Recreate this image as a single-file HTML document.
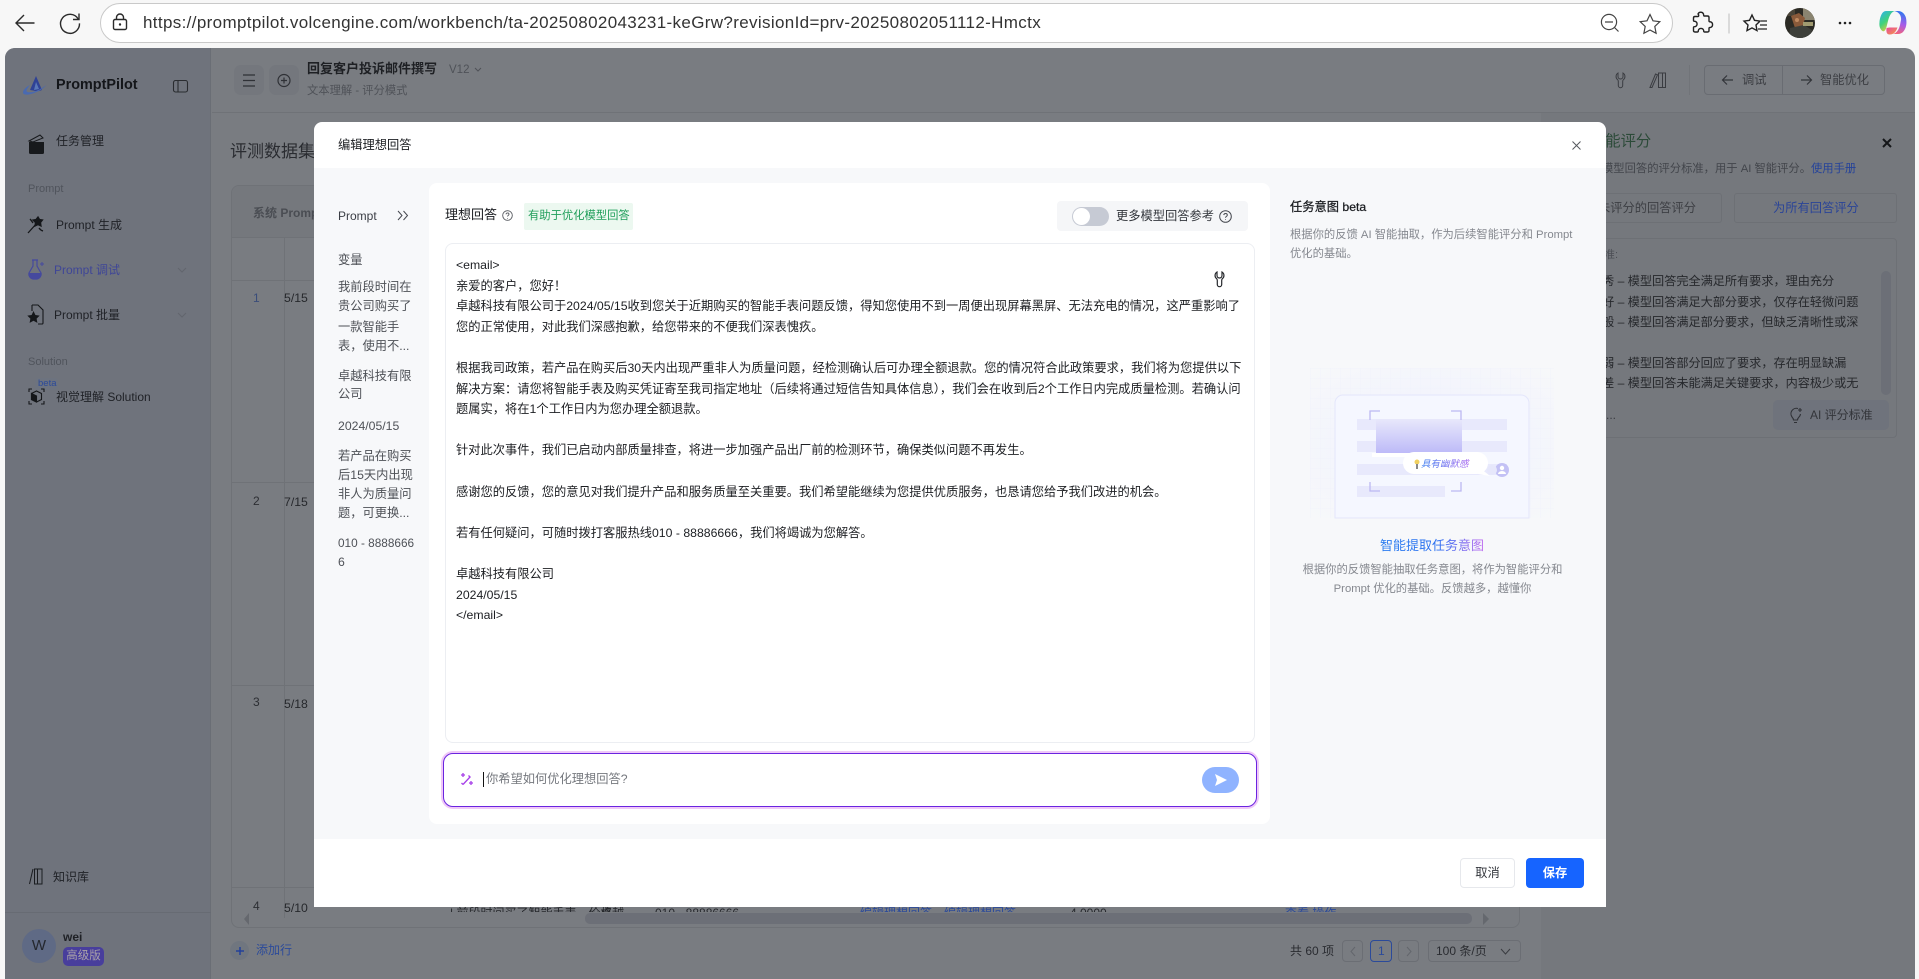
<!DOCTYPE html>
<html lang="zh"><head><meta charset="utf-8"><title>PromptPilot</title>
<style>
html,body{margin:0;padding:0;width:1919px;height:979px;overflow:hidden;background:#f7f7f7}
body{position:relative;font-family:"Liberation Sans","Noto Sans CJK SC",sans-serif;font-size:12.25px;color:#1c1e22}
.a{position:absolute;box-sizing:border-box}
.t{position:absolute;white-space:nowrap;line-height:20px}
svg{position:absolute;overflow:visible}
</style></head><body>

<!-- browser chrome -->
<svg style="left:0;top:0" width="90" height="48" fill="none" stroke="#2a2a2a" stroke-width="1.4">
<path d="M34.500 23H16.500M24 15l-8 8 8 8"/>
<path d="M78.200 19a9.500 9.500 0 1 0 1.300 4.400"/><path d="M79 13.500V19.500H73"/>
</svg>
<div class="a" style="left:100px;top:3px;width:1573px;height:40px;background:#fff;border:1px solid #c9c9c9;border-radius:20px"></div>
<svg style="left:0;top:0" width="140" height="48" fill="none" stroke="#2a2a2a" stroke-width="1.400">
<path d="M115 19.500h10a1.500 1.500 0 0 1 1.500 1.500v7a1.500 1.500 0 0 1-1.500 1.500h-10a1.500 1.500 0 0 1-1.500-1.500v-7a1.500 1.500 0 0 1 1.500-1.500zM116.500 19.500v-2a3.500 3.500 0 0 1 7 0v2"/><circle cx="120" cy="24.500" r="1.200" fill="#2a2a2a" stroke="none"/>
</svg>
<div class="t" style="left:143px;top:13px;font-size:17px;color:#333;letter-spacing:.35px">https://promptpilot.volcengine.com/workbench/ta-20250802043231-keGrw?revisionId=prv-20250802051112-Hmctx</div>
<svg style="left:1595px;top:5px" width="320" height="40" fill="none" stroke="#444" stroke-width="1.200">
<circle cx="14" cy="17" r="7.600"/><path d="M10 17h8M19.500 22.500L23.500 26.500"/>
<path d="M55 9.500l3 6.300 6.800.9-5 4.800 1.300 6.800-6.100-3.300-6.100 3.300 1.300-6.800-5-4.800 6.800-.9z"/>
<path d="M104 10a3 3 0 0 1 5.500 0c0 1 0 1.500.5 2h3.500c1 0 1.500.5 1.500 1.500V17c0 .5.500 1 1.500.8a3 3 0 0 1 0 5.700c-1-.2-1.500.300-1.500.8v2.200c0 1-.5 1.500-1.500 1.500h-3c-.5 0-1-.5-.8-1.500a2.800 2.800 0 0 0-5.400 0c.2 1-.3 1.500-.8 1.500h-2.500c-1 0-1.500-.5-1.500-1.500v-3c0-.5.500-1 1.500-.8a2.800 2.800 0 0 0 0-5.400c-1 .2-1.500-.3-1.500-.8v-2.500c0-1 .5-1.500 1.500-1.500h3c.5 0 1-.5.500-2z" stroke="#222" stroke-width="1.400" transform="translate(-1 -1)"/>
<path d="M134 8.500v20" stroke="#c8c8c8"/>
<path d="M157 10l2.500 5.300 5.500.8-4 3.900 1 5.600-5-2.700-5 2.700 1-5.600-4-3.900 5.500-.8z" stroke="#222" stroke-width="1.400"/>
<path d="M166 16h6M165 20h7M163 24h9" stroke="#222"/>
<circle cx="245" cy="18" r="1.300" fill="#222" stroke="none"/><circle cx="250" cy="18" r="1.300" fill="#222" stroke="none"/><circle cx="255" cy="18" r="1.300" fill="#222" stroke="none"/>
</svg>
<svg style="left:1785px;top:8px" width="30" height="30"><defs><clipPath id="av"><circle cx="15" cy="15" r="15"/></clipPath></defs>
<g clip-path="url(#av)"><rect width="30" height="30" fill="#2b2a24"/><rect x="18" y="0" width="12" height="12" fill="#8a8470"/><rect x="0" y="0" width="10" height="8" fill="#4a4438"/><path d="M6 8l8-3 6 5-2 8-8 2z" fill="#8a5a3a"/><path d="M5 20l14-3 8 5-2 8H4z" fill="#3d3f3a"/><rect x="18" y="14" width="10" height="4" fill="#a09a70"/><circle cx="12" cy="12" r="2" fill="#c08a60"/></g></svg>
<svg style="left:1879px;top:10px" width="28" height="26" viewBox="0 0 28 26"><defs>
<linearGradient id="c1" x1="0" y1="0" x2=".6" y2="1"><stop offset="0" stop-color="#2fb0f2"/><stop offset=".55" stop-color="#3fd27a"/><stop offset="1" stop-color="#f6c93a"/></linearGradient>
<linearGradient id="c2" x1=".6" y1="0" x2=".4" y2="1"><stop offset="0" stop-color="#2a78f0"/><stop offset=".55" stop-color="#a85ce8"/><stop offset="1" stop-color="#f2627a"/></linearGradient>
<linearGradient id="c3" x1="0" y1="0" x2="1" y2="1"><stop offset="0" stop-color="#e84aa0"/><stop offset="1" stop-color="#f59a40"/></linearGradient></defs>
<path d="M7 1h8.500C11.500 2.500 10 7 9 11l-1.500 6C6.500 20.500 5 22 3.500 21 1 19.500 0 16 .5 12 1 7 3 1 7 1z" fill="url(#c1)"/>
<path d="M15 1h4c4 0 7 3 8 7 1 5 .5 10-3 14-1 1-3 2-5 2H14c4-1 6-5 7-9l1-5c.5-3-1-8-7-9z" fill="url(#c2)"/>
<path d="M7.500 18l3-.5h8c-1 3-3 7-8 7-2.500 0-3.500-2-3-6.500z" fill="url(#c3)"/></svg>

<!-- app background -->
<div class="a" style="left:5px;top:48px;width:1910px;height:935px;background:#797c81;border-radius:10px 10px 0 0;overflow:hidden">
  <div class="a" style="left:0;top:0;width:206px;height:935px;background:#6f737c;border-right:1px solid #6a6e75"></div>
  <div class="a" style="left:207px;top:64px;width:1703px;height:1px;background:#6f7277"></div>
  <div class="a" style="left:1536px;top:65px;width:374px;height:870px;background:#75787d"></div>
  <div class="a" style="left:0;top:864px;width:206px;height:1px;background:#676b73"></div>
</div>

<!-- sidebar -->
<svg style="left:23px;top:76px" width="24" height="19" viewBox="0 0 24 19">
<path d="M13 0l6 14c-3 1.500-6 1.500-9 .5L7 14z" fill="#2f4296"/><path d="M13 6l3 7-5 1z" fill="#5a78b8"/>
<path d="M7 9C3 11 0 14 0 16.500 0 19 4 19 8 18c6-1.500 12-5 15.500-9-3.500 2.500-9 6-14 7-3 .5-5.500.5-6-1 0-1.500 1.500-3.500 3.500-6z" fill="#4a6ab0"/></svg>
<div class="t" style="left:56px;top:75px;font-size:14.400px;font-weight:700;color:#14161a">PromptPilot</div>
<svg style="left:173px;top:80px" width="16" height="13" fill="none" stroke="#2a2c30" stroke-width="1.100"><rect x=".5" y=".5" width="14" height="11.500" rx="2"/><path d="M5 .5v11.500"/></svg>

<svg style="left:28px;top:134px" width="17" height="21" viewBox="0 0 17 21"><path d="M1 7L12 1l3 3-10 4z" fill="none" stroke="#17191c" stroke-width="1"/><path d="M1 8h15v10.500a1.500 1.500 0 0 1-1.500 1.500h-12A1.500 1.500 0 0 1 1 18.500z" fill="#17191c"/></svg>
<div class="t" style="left:56px;top:131px;font-size:12px;color:#1f2126">任务管理</div>
<div class="t" style="left:28px;top:179px;font-size:11px;color:#50545c">Prompt</div>

<svg style="left:27px;top:216px" width="18" height="18" viewBox="0 0 18 18" fill="none" stroke="#15171a" stroke-width="1.300"><path d="M1 17L10 7"/><path d="M11 1l1.500 2.500L15.500 4 13.500 6.500 14 10l-3-1.500L8 10l.5-3.500L6 4l3-.5z" fill="#15171a"/><path d="M3 3c1 1 2 2.500 3 4M12 12c1 1.500 2.500 2.500 4 3"/></svg>
<div class="t" style="left:56px;top:215px;font-size:12px;color:#1f2126">Prompt 生成</div>

<svg style="left:27px;top:259px" width="18" height="22" viewBox="0 0 18 22"><path d="M5 1h6M6 1v6L2 14a5 5 0 0 0 4 6h4a5 5 0 0 0 4-6l-4-7V1" fill="none" stroke="#45499e" stroke-width="1.200"/><path d="M1.800 14h12.400a5 5 0 0 1-4.200 6H6a5 5 0 0 1-4.200-6z" fill="#45499e"/><path d="M15 3v4M13 5h4" stroke="#45499e"/></svg>
<div class="t" style="left:54px;top:260px;font-size:12px;color:#3f4697">Prompt 调试</div>
<svg style="left:177px;top:266px" width="10" height="8" fill="none" stroke="#62656d"><path d="M1 2l4 4 4-4"/></svg>

<svg style="left:27px;top:304px" width="17" height="21" viewBox="0 0 17 21"><path d="M5 1h6l5 5v13a1 1 0 0 1-1 1h-4M5 1v6" fill="none" stroke="#15171a" stroke-width="1.100"/><path d="M6.500 7l1.900 4 4.300.6-3.100 3 .8 4.300-3.900-2.100-3.900 2.100.8-4.300-3.100-3 4.300-.6z" fill="#15171a"/></svg>
<div class="t" style="left:54px;top:305px;font-size:12px;color:#1f2126">Prompt 批量</div>
<svg style="left:177px;top:311px" width="10" height="8" fill="none" stroke="#62656d"><path d="M1 2l4 4 4-4"/></svg>

<div class="t" style="left:28px;top:352px;font-size:11px;color:#50545c">Solution</div>
<div class="a" style="left:35px;top:378px;width:23px;height:12px;background:#6d737f;border-radius:3px"></div>
<div class="t" style="left:38px;top:374px;font-size:9.500px;color:#2b4a9a">beta</div>
<svg style="left:28px;top:388px" width="17" height="17" viewBox="0 0 17 17" fill="none" stroke="#15171a" stroke-width="1.100"><path d="M1 4V1h3M13 1h3v3M16 13v3h-3M4 16H1v-3"/><path d="M8.500 3l5 2.500v6l-5 2.500-5-2.500v-6z"/><path d="M3.500 5.500l5 2.500v6l-5-2.500z" fill="#15171a"/></svg>
<div class="t" style="left:56px;top:387px;font-size:12px;color:#1f2126">视觉理解 Solution</div>

<svg style="left:29px;top:868px" width="14" height="17" viewBox="0 0 14 17" fill="none" stroke="#1a1c20" stroke-width="1"><path d="M.5 16L4 1M5.500 1h3v15h-3zM8.500 1H13v15H8.500z"/></svg>
<div class="t" style="left:53px;top:867px;font-size:12px;color:#1f2126">知识库</div>
<div class="a" style="left:22px;top:929px;width:34px;height:34px;border-radius:50%;background:#5f6a85"></div>
<div class="t" style="left:22px;top:936px;width:34px;text-align:center;font-size:15px;color:#24272e">W</div>
<div class="t" style="left:63px;top:927px;font-size:12px;font-weight:700;color:#1f2126">wei</div>
<div class="a" style="left:63px;top:947px;width:41px;height:19px;background:#483e9c;border-radius:5px"></div>
<div class="t" style="left:63px;top:946px;width:41px;text-align:center;font-size:11.500px;color:#a9a2a8">高级版</div>

<!-- top header -->
<div class="a" style="left:234px;top:65px;width:30px;height:30px;background:#74777d;border-radius:7px"></div>
<div class="a" style="left:269px;top:65px;width:30px;height:30px;background:#74777d;border-radius:7px"></div>
<svg style="left:242px;top:73px" width="50" height="15" fill="none" stroke="#2f3136" stroke-width="1.200"><path d="M1 2h12M1 7.500h12M1 13h12"/><circle cx="42" cy="7.500" r="6"/><path d="M39 7.500h6M42 4.500v6"/></svg>
<div class="t" style="left:307px;top:59px;font-size:13px;font-weight:700;color:#1e2024">回复客户投诉邮件撰写</div>
<div class="t" style="left:449px;top:60px;font-size:11.500px;color:#4f5258">V12</div>
<svg style="left:474px;top:67px" width="8" height="6" fill="none" stroke="#4f5258"><path d="M1 1l3 3 3-3"/></svg>
<div class="t" style="left:307px;top:81px;font-size:11.300px;color:#4f5258">文本理解 - 评分模式</div>

<svg style="left:1615px;top:72px" width="52" height="16" viewBox="0 0 52 16" fill="none" stroke="#3a3c41" stroke-width="1"><path d="M3 1C.5 2.500.5 6 2.500 7.500c.8.600.8 1.200.8 2v4a2.200 2.200 0 0 0 4.400 0v-4c0-.8 0-1.400.8-2C10.500 6 10.500 2.500 8 1v3.500a2.500 2.500 0 0 1-5 0z"/><path d="M35 15.500L40.500 2l2 .8L37 15.500zM43.500 1h4v14.500h-4zM47.500 1h3v14.500h-3z"/></svg>
<div class="a" style="left:1689px;top:65px;width:1px;height:30px;background:#717479"></div>
<div class="a" style="left:1704px;top:65px;width:181px;height:30px;border:1px solid #696c72;border-radius:4px;background:#797c81"></div>
<div class="a" style="left:1782px;top:65px;width:1px;height:30px;background:#696c72"></div>
<svg style="left:1721px;top:72px" width="100" height="16" fill="none" stroke="#33353a" stroke-width="1.200"><path d="M12 8H1.500M6 3.500L1.500 8 6 12.500"/><path d="M80 8h10.500M86 3.500L90.500 8 86 12.500"/></svg>
<div class="t" style="left:1742px;top:70px;font-size:12.250px;color:#3d3f44">调试</div>
<div class="t" style="left:1820px;top:70px;font-size:12.250px;color:#3d3f44">智能优化</div>

<!-- background table -->
<div class="t" style="left:230px;top:142px;font-size:17px;color:#2a2c31">评测数据集</div>
<div class="a" style="left:231px;top:185px;width:1289px;height:743px;border:1px solid #6f7277;border-radius:8px;overflow:hidden">
  <div class="a" style="left:0;top:0;width:1289px;height:52px;background:#75787d;border-bottom:1px solid #6f7277"></div>
  <div class="a" style="left:0;top:94px;width:1289px;height:1px;background:#6f7277"></div>
  <div class="a" style="left:0;top:296px;width:1289px;height:1px;background:#6f7277"></div>
  <div class="a" style="left:0;top:499px;width:1289px;height:1px;background:#6f7277"></div>
  <div class="a" style="left:0;top:701px;width:1289px;height:1px;background:#6f7277"></div>
  <div class="a" style="left:52px;top:52px;width:1px;height:680px;background:#6f7277"></div>
  <div class="t" style="left:21px;top:17px;font-size:12px;font-weight:700;color:#4a4d53">系统 Prompt</div>
</div>
<div class="t" style="left:253px;top:288px;font-size:12px;color:#3a4d7a">1</div>
<div class="t" style="left:284px;top:288px;font-size:12.250px;color:#26282c">5/15</div>
<div class="t" style="left:253px;top:491px;font-size:12px;color:#2c2e33">2</div>
<div class="t" style="left:284px;top:492px;font-size:12.250px;color:#26282c">7/15</div>
<div class="t" style="left:253px;top:692px;font-size:12px;color:#2c2e33">3</div>
<div class="t" style="left:284px;top:694px;font-size:12.250px;color:#26282c">5/18</div>
<div class="a" style="left:240px;top:893px;width:1260px;height:19px;overflow:hidden">
  <div class="t" style="left:13px;top:3px;font-size:12px;color:#2c2e33">4</div>
  <div class="t" style="left:44px;top:5px;font-size:12.250px;color:#26282c">5/10</div>
  <div class="t" style="left:210px;top:10px;font-size:12px;color:#26282c">| 前段时间买了智能手表，价格</div>
  <div class="t" style="left:360px;top:10px;font-size:12px;color:#26282c">卓越</div>
  <div class="t" style="left:415px;top:10px;font-size:12px;color:#26282c">010 - 88886666</div>
  <div class="t" style="left:620px;top:10px;font-size:12px;color:#2b4a9a">编辑理想回答，编辑理想回答</div>
  <div class="t" style="left:830px;top:10px;font-size:12px;color:#26282c">4.0000</div>
  <div class="t" style="left:1045px;top:10px;font-size:12px;color:#2b4a9a">查看 操作</div>
  <div class="t" style="left:1190px;top:10px;font-size:12px;color:#26282c">. . . .</div>
</div>
<div class="a" style="left:585px;top:913px;width:887px;height:11px;background:#6c6f77;border-radius:5px"></div>
<svg style="left:243px;top:912px" width="1250" height="14"><path d="M6 1L1 7l5 6z" fill="#65686e"/><path d="M1240 1l6 6-6 6z" fill="#65686e"/></svg>
<div class="a" style="left:230px;top:941px;width:19px;height:19px;border-radius:50%;background:#70767f"></div>
<svg style="left:235px;top:946px" width="10" height="10" stroke="#22409a" stroke-width="1.500"><path d="M5 1v8M1 5h8"/></svg>
<div class="t" style="left:256px;top:940px;font-size:12px;color:#2b4a9a">添加行</div>
<div class="t" style="left:1290px;top:941px;font-size:12px;color:#2a2c31">共 60 项</div>
<div class="a" style="left:1342px;top:940px;width:21px;height:22px;border:1px solid #6b6e74;border-radius:4px"></div>
<div class="a" style="left:1370px;top:940px;width:22px;height:22px;border:1px solid #2b4a9a;border-radius:4px"></div>
<div class="a" style="left:1398px;top:940px;width:21px;height:22px;border:1px solid #6b6e74;border-radius:4px"></div>
<div class="a" style="left:1428px;top:940px;width:93px;height:22px;border:1px solid #6b6e74;border-radius:4px"></div>
<svg style="left:1349px;top:946px" width="80" height="11" fill="none" stroke="#63666c"><path d="M6 1L2 5.500 6 10"/><path d="M58 1l4 4.500L58 10"/></svg>
<div class="t" style="left:1378px;top:941px;font-size:12px;color:#2b4a9a">1</div>
<div class="t" style="left:1436px;top:941px;font-size:12px;color:#2a2c31">100 条/页</div>
<svg style="left:1500px;top:948px" width="11" height="8" fill="none" stroke="#3a3c41"><path d="M1 1l4.500 5L10 1"/></svg>

<!-- right panel background -->
<div class="t" style="left:1590px;top:132px;font-size:15.300px;color:#2b4a38">智能评分</div>
<svg style="left:1882px;top:138px" width="10" height="10" stroke="#15171a" stroke-width="2"><path d="M1 1l8 8M9 1l-8 8"/></svg>
<div class="t" style="left:1500px;top:159px;font-size:11.300px;color:#42454b;width:311px;text-align:right">定义模型回答的评分标准，用于 AI 智能评分。</div>
<div class="t" style="left:1811px;top:159px;font-size:11.300px;color:#24429a">使用手册</div>
<div class="a" style="left:1590px;top:193px;width:132px;height:30px;border:1px solid #6d7075;border-radius:3px"></div>
<div class="t" style="left:1598px;top:198px;font-size:12.250px;color:#3d3f44">未评分的回答评分</div>
<div class="a" style="left:1734px;top:193px;width:163px;height:30px;border:1px solid #6d7075;border-radius:3px"></div>
<div class="t" style="left:1773px;top:198px;font-size:12.250px;color:#2a4498">为所有回答评分</div>
<div class="a" style="left:1560px;top:238px;width:337px;height:200px;border:1px solid #6d7075;border-radius:4px"></div>
<div class="t" style="left:1571px;top:245px;font-size:11px;color:#4c4f55">评分标准:</div>
<div class="t" style="left:1590px;top:271px;font-size:12.150px;color:#26282c">优秀 – 模型回答完全满足所有要求，理由充分</div>
<div class="t" style="left:1590px;top:292px;font-size:12.150px;color:#26282c">良好 – 模型回答满足大部分要求，仅存在轻微问题</div>
<div class="t" style="left:1590px;top:312px;font-size:12.150px;color:#26282c">一般 – 模型回答满足部分要求，但缺乏清晰性或深</div>
<div class="t" style="left:1590px;top:353px;font-size:12.150px;color:#26282c">较弱 – 模型回答部分回应了要求，存在明显缺漏</div>
<div class="t" style="left:1590px;top:373px;font-size:12.150px;color:#26282c">很差 – 模型回答未能满足关键要求，内容极少或无</div>
<div class="t" style="left:1606px;top:405px;font-size:12px;color:#3a3c41">...</div>
<div class="a" style="left:1881px;top:271px;width:10px;height:124px;background:#6c6f77;border-radius:5px"></div>
<div class="a" style="left:1773px;top:400px;width:116px;height:30px;background:#6f737c;border-radius:5px"></div>
<svg style="left:1789px;top:407px" width="14" height="17" fill="none" stroke="#2f3136" stroke-width="1.100"><path d="M9 1.500A5.500 5.500 0 0 0 3 10c1 1 1.500 2 1.500 3h4c0-1 .5-2 1.500-3a5 5 0 0 0 1.500-3M5 15.500h3"/><path d="M11 1v4M9 3h4"/></svg>
<div class="t" style="left:1810px;top:405px;font-size:12px;color:#33353a">AI 评分标准</div>

<!-- MODAL -->
<div class="a" style="left:314px;top:122px;width:1292px;height:785px;background:#fff;border-radius:8px 8px 0 0">
  <div class="a" style="left:0;top:46px;width:1292px;height:671px;background:#f7f8fa"></div>
</div>
<div class="t" style="left:338px;top:135px;font-size:12.250px;color:#1a1c20">编辑理想回答</div>
<svg style="left:1572px;top:141px" width="9" height="9" stroke="#55585e" stroke-width="1"><path d="M.5.5l8 8M8.500.5l-8 8"/></svg>

<!-- left column -->
<div class="t" style="left:338px;top:206px;font-size:12px;color:#3a3d44">Prompt</div>
<svg style="left:397px;top:210px" width="12" height="11" fill="none" stroke="#45484f" stroke-width="1"><path d="M1 1l4 4.500L1 10M6.500 1l4 4.500-4 4.500"/></svg>
<div class="t" style="left:338px;top:250px;font-size:12.250px;color:#4e5157">变量</div>
<div class="t" style="left:338px;top:277px;font-size:12.250px;color:#4e5157">我前段时间在</div>
<div class="t" style="left:338px;top:296px;font-size:12.250px;color:#4e5157">贵公司购买了</div>
<div class="t" style="left:338px;top:317px;font-size:12.250px;color:#4e5157">一款智能手</div>
<div class="t" style="left:338px;top:336px;font-size:12.250px;color:#4e5157">表，使用不...</div>
<div class="t" style="left:338px;top:366px;font-size:12.250px;color:#4e5157">卓越科技有限</div>
<div class="t" style="left:338px;top:384px;font-size:12.250px;color:#4e5157">公司</div>
<div class="t" style="left:338px;top:416px;font-size:12.250px;color:#4e5157">2024/05/15</div>
<div class="t" style="left:338px;top:446px;font-size:12.250px;color:#4e5157">若产品在购买</div>
<div class="t" style="left:338px;top:465px;font-size:12.250px;color:#4e5157">后15天内出现</div>
<div class="t" style="left:338px;top:484px;font-size:12.250px;color:#4e5157">非人为质量问</div>
<div class="t" style="left:338px;top:503px;font-size:12.250px;color:#4e5157">题，可更换...</div>
<div class="t" style="left:338px;top:533px;font-size:11.800px;color:#4e5157">010 - 8888666</div>
<div class="t" style="left:338px;top:552px;font-size:12.250px;color:#4e5157">6</div>

<!-- center card -->
<div class="a" style="left:429px;top:183px;width:841px;height:641px;background:#fff;border-radius:8px"></div>
<div class="t" style="left:445px;top:205px;font-size:13px;color:#1a1c20">理想回答</div>
<svg style="left:502px;top:210px" width="11" height="11" fill="none" stroke="#55585e" stroke-width=".9"><circle cx="5.500" cy="5.500" r="4.800"/><path d="M4 4.300c.2-1.800 3-1.800 3 0 0 1-1.500 1.100-1.500 2.200M5.500 8v.6"/></svg>
<div class="a" style="left:524px;top:203px;width:109px;height:27px;background:#ecf8f0;border-radius:2px"></div>
<div class="t" style="left:528px;top:206px;font-size:11.300px;color:#1f9e5a">有助于优化模型回答</div>
<div class="a" style="left:1057px;top:201px;width:191px;height:30px;background:#f5f6f8;border-radius:4px"></div>
<div class="a" style="left:1072px;top:207px;width:37px;height:19px;background:#c6cad4;border-radius:10px"></div>
<div class="a" style="left:1073px;top:208px;width:17px;height:17px;background:#fff;border-radius:50%"></div>
<div class="t" style="left:1116px;top:206px;font-size:12.250px;color:#33363c">更多模型回答参考</div>
<svg style="left:1219px;top:210px" width="13" height="13" fill="none" stroke="#45484f" stroke-width="1"><circle cx="6.500" cy="6.500" r="5.800"/><path d="M4.800 5.100c.2-2.200 3.500-2.200 3.500 0 0 1.200-1.800 1.300-1.800 2.600M6.500 9.200v.7"/></svg>

<div class="a" style="left:445px;top:243px;width:810px;height:500px;background:#fff;border:1px solid #eceef2;border-radius:8px"></div>
<svg style="left:1214px;top:271px" width="12" height="16" viewBox="0 0 12 16" fill="none" stroke="#25272b" stroke-width="1.200"><path d="M3 1C.5 2.500.5 6 2.500 7.500c.8.600.8 1.200.8 2v4a2.200 2.200 0 0 0 4.400 0v-4c0-.8 0-1.400.8-2C10.500 6 10.500 2.500 8 1v3.500a2.500 2.500 0 0 1-5 0z"/></svg>
<div style="position:absolute;left:456px;top:255px;width:790px;font-size:12.250px;line-height:20.600px;color:#1c1e22;white-space:pre">&lt;email&gt;
亲爱的客户，您好！
卓越科技有限公司于2024/05/15收到您关于近期购买的智能手表问题反馈，得知您使用不到一周便出现屏幕黑屏、无法充电的情况，这严重影响了
您的正常使用，对此我们深感抱歉，给您带来的不便我们深表愧疚。

根据我司政策，若产品在购买后30天内出现严重非人为质量问题，经检测确认后可办理全额退款。您的情况符合此政策要求，我们将为您提供以下
解决方案：请您将智能手表及购买凭证寄至我司指定地址（后续将通过短信告知具体信息），我们会在收到后2个工作日内完成质量检测。若确认问
题属实，将在1个工作日内为您办理全额退款。

针对此次事件，我们已启动内部质量排查，将进一步加强产品出厂前的检测环节，确保类似问题不再发生。

感谢您的反馈，您的意见对我们提升产品和服务质量至关重要。我们希望能继续为您提供优质服务，也恳请您给予我们改进的机会。

若有任何疑问，可随时拨打客服热线010 - 88886666，我们将竭诚为您解答。

卓越科技有限公司
2024/05/15
&lt;/email&gt;</div>

<!-- input -->
<div class="a" style="left:443px;top:753px;width:814px;height:54px;border:1.500px solid #6a24e0;border-radius:10px;background:#fff;box-shadow:0 0 0 2px #efc8f8"></div>
<svg style="left:460px;top:772px" width="14" height="14" viewBox="0 0 14 14" fill="none" stroke="#a63fe8" stroke-width="1.300"><path d="M3 12.500L10 5M1.500 11l1.500 1.500M8.500 3.500l2 2"/><path d="M3 1v4M1 3h4M11 9v4M9 11h4"/></svg>
<div class="a" style="left:483px;top:772px;width:1px;height:15px;background:#111"></div>
<div class="t" style="left:486px;top:769px;font-size:12.250px;color:#75787e">你希望如何优化理想回答?</div>
<div class="a" style="left:1202px;top:767px;width:37px;height:26px;background:#8fb3ff;border-radius:13px"></div>
<svg style="left:1214px;top:773px" width="14" height="14"><path d="M1 1l12 6-12 6 2-6z" fill="#fff"/></svg>

<!-- right column -->
<div class="t" style="left:1290px;top:197px;font-size:12.250px;color:#1a1c20;-webkit-text-stroke:.25px #1a1c20">任务意图 beta</div>
<div class="t" style="left:1290px;top:225px;font-size:11.300px;color:#85888f">根据你的反馈 AI 智能抽取，作为后续智能评分和 Prompt</div>
<div class="t" style="left:1290px;top:244px;font-size:11.300px;color:#85888f">优化的基础。</div>

<!-- illustration -->
<svg style="left:1310px;top:368px" width="244" height="150" viewBox="0 0 244 150">
<defs>
<pattern id="g" width="10" height="10" patternUnits="userSpaceOnUse"><path d="M10 0H0V10" fill="none" stroke="#eef0fb" stroke-width=".6"/></pattern>
<radialGradient id="rg" cx=".5" cy=".5" r=".7"><stop offset="0" stop-color="#eff1fe"/><stop offset="1" stop-color="#f7f8fa"/></radialGradient>
<linearGradient id="pg" x1="0" y1="0" x2="0" y2="1"><stop offset="0" stop-color="#e8e8fb"/><stop offset="1" stop-color="#bdbaf8"/></linearGradient>
<linearGradient id="tg" x1="0" y1="0" x2="1" y2="0"><stop offset="0" stop-color="#3a7ef0"/><stop offset="1" stop-color="#b06ef0"/></linearGradient>
</defs>
<rect width="244" height="150" fill="url(#rg)"/><rect width="244" height="150" fill="url(#g)"/>
<path d="M25 150V35a8 8 0 0 1 8-8h178a8 8 0 0 1 8 8v115z" fill="#f5f7ff" stroke="#e4e6fb"/>
<rect x="47" y="51" width="150" height="11" fill="#e8e9fc"/><rect x="47" y="73" width="150" height="11" fill="#e8e9fc"/>
<rect x="47" y="96" width="150" height="11" fill="#e8e9fc"/><rect x="47" y="118" width="88" height="11" fill="#e8e9fc"/>
<rect x="66" y="51" width="86" height="34" fill="url(#pg)"/><rect x="62" y="85" width="40" height="4" fill="#fff"/>
<path d="M60 52v-9h10M141 43h10v9M60 114v9h10M151 114v9h-10" fill="none" stroke="#bcb8f2" stroke-width="1.300"/>
<circle cx="192" cy="102" r="7" fill="#c3c1f5"/><circle cx="192" cy="100" r="2.200" fill="#fff"/><path d="M188 106a4 3 0 0 1 8 0z" fill="#fff"/>
<circle cx="182" cy="102" r="5" fill="#e6e7fb"/>
<rect x="93" y="84" width="85" height="22" rx="11" fill="#fff"/><path d="M170 100l10 8-12-2z" fill="#fff"/>
<circle cx="107" cy="94" r="2.500" fill="#f0d060"/><rect x="106" y="96" width="2" height="5" fill="#888"/>
<text x="111" y="99" font-size="9.500" font-style="italic" fill="url(#tg)" font-family="Liberation Sans,Noto Sans CJK SC,sans-serif">具有幽默感</text>
</svg>
<div class="t" style="left:1380px;top:536px;font-size:13px;background:linear-gradient(90deg,#2a7df0 0%,#2a6ff0 55%,#c06cf0 100%);-webkit-background-clip:text;background-clip:text;color:transparent">智能提取任务意图</div>
<div class="t" style="left:1270px;top:560px;width:325px;text-align:center;font-size:11.300px;color:#85888f">根据你的反馈智能抽取任务意图，将作为智能评分和</div>
<div class="t" style="left:1270px;top:579px;width:325px;text-align:center;font-size:11.300px;color:#85888f">Prompt 优化的基础。反馈越多，越懂你</div>

<!-- footer buttons -->
<div class="a" style="left:1460px;top:858px;width:55px;height:30px;background:#fff;border:1px solid #e6e8ec;border-radius:4px;text-align:center;line-height:28px;font-size:12.250px;color:#33363c">取消</div>
<div class="a" style="left:1526px;top:858px;width:58px;height:30px;background:#1664ff;border-radius:4px;text-align:center;line-height:30px;font-size:12.250px;color:#fff;font-weight:700">保存</div>
</body></html>
